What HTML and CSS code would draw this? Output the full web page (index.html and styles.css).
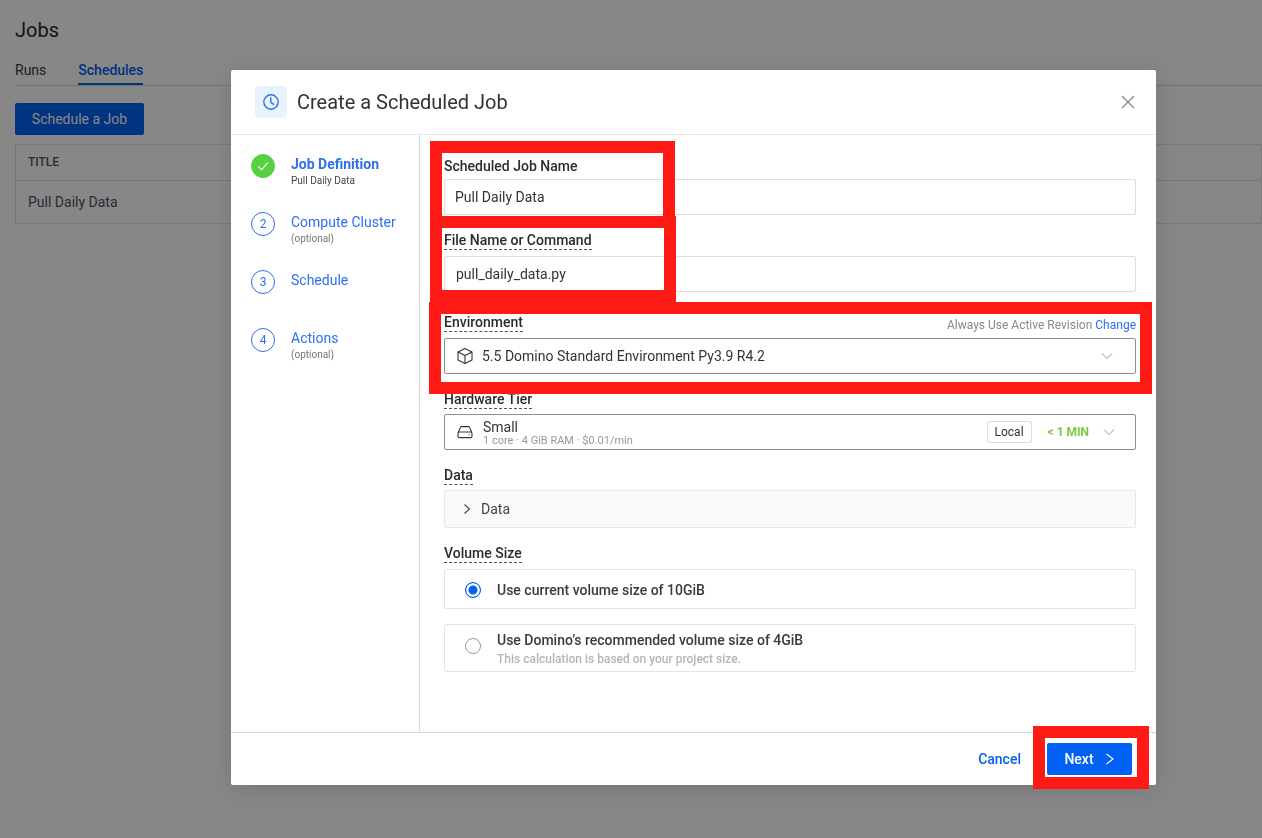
FILE: index.html
```html
<!DOCTYPE html>
<html lang="en">
<head>
    <meta charset="UTF-8">
    <meta name="viewport" content="width=device-width, initial-scale=1.0">
    <title>Jobs</title>
    <link rel="stylesheet" href="styles.css">
</head>
<body>

<div class="page">
    <h1 class="page-title">Jobs</h1>
    <div class="tabs">
        <span class="tab">Runs</span>
        <span class="tab tab-active">Schedules</span>
    </div>
    <button class="btn-schedule">Schedule a Job</button>
    <table class="jobs-table">
        <thead>
            <tr><th>TITLE</th></tr>
        </thead>
        <tbody>
            <tr><td>Pull Daily Data</td></tr>
        </tbody>
    </table>
</div>

<div class="overlay"></div>

<div class="modal">
    <div class="modal-header">
        <span class="modal-icon">
            <svg width="18" height="18" viewBox="0 0 18 18" fill="none" stroke="#2e6ff2" stroke-width="1.4" stroke-linecap="round" stroke-linejoin="round">
                <circle cx="9" cy="9" r="7.2"/>
                <path d="M8.8 4.8V9.4L11.6 11.4"/>
            </svg>
        </span>
        <h2 class="modal-title">Create a Scheduled Job</h2>
        <svg class="modal-close" width="14" height="14" viewBox="0 0 14 14" fill="none" stroke="#808080" stroke-width="1.1">
            <path d="M1 1L13 13M13 1L1 13"/>
        </svg>
    </div>

    <div class="modal-body">
        <div class="steps">
            <div class="step">
                <span class="step-num step-done">
                    <svg width="14" height="14" viewBox="0 0 14 14" fill="none" stroke="#fff" stroke-width="1.2">
                        <path d="M2.2 7.4L5.6 10.6L11.8 3.6"/>
                    </svg>
                </span>
                <div>
                    <div class="step-title step-current">Job Definition</div>
                    <div class="step-sub step-sub-dark">Pull Daily Data</div>
                </div>
            </div>
            <div class="step">
                <span class="step-num">2</span>
                <div>
                    <div class="step-title">Compute Cluster</div>
                    <div class="step-sub">(optional)</div>
                </div>
            </div>
            <div class="step">
                <span class="step-num">3</span>
                <div>
                    <div class="step-title">Schedule</div>
                </div>
            </div>
            <div class="step">
                <span class="step-num">4</span>
                <div>
                    <div class="step-title">Actions</div>
                    <div class="step-sub">(optional)</div>
                </div>
            </div>
        </div>

        <div class="form">
            <div class="field">
                <div class="field-head field-head-first"><span class="label label-plain">Scheduled Job Name</span></div>
                <input class="text-input" type="text" value="Pull Daily Data">
            </div>
            <div class="field field-wide">
                <div class="field-head field-head-gap"><span class="label">File Name or Command</span></div>
                <input class="text-input text-input-file" type="text" value="pull_daily_data.py">
            </div>
            <div class="field">
                <div class="field-head field-head-gap">
                    <span class="label">Environment</span>
                    <span class="revision">Always Use Active Revision <a class="link">Change</a></span>
                </div>
                <div class="select">
                    <svg class="select-icon" width="18" height="18" viewBox="0 0 18 18" fill="none" stroke="#333" stroke-width="1.1" stroke-linejoin="round">
                        <path d="M9 1.5L16 5V13L9 16.5L2 13V5Z"/>
                        <path d="M2 5L9 8.6L16 5M9 8.6V16.5"/>
                    </svg>
                    <span class="select-text">5.5 Domino Standard Environment Py3.9 R4.2</span>
                    <svg class="chevron" width="12" height="12" viewBox="0 0 12 12" fill="none" stroke="#999" stroke-width="1">
                        <path d="M1 3.5L6 8.5L11 3.5"/>
                    </svg>
                </div>
            </div>
            <div class="field">
                <div class="field-head"><span class="label">Hardware Tier</span></div>
                <div class="select select-tier">
                    <svg class="select-icon select-icon-drive" width="16" height="14" viewBox="0 0 16 14" fill="none" stroke="#333" stroke-width="1.1" stroke-linejoin="round">
                        <path d="M1.2 7.5L3.4 2.4C3.6 1.9 4 1.6 4.6 1.6H11.4C12 1.6 12.4 1.9 12.6 2.4L14.8 7.5"/>
                        <rect x="1" y="7" width="14" height="5.6" rx="1.4"/>
                        <path d="M11.6 9.8H12.6"/>
                    </svg>
                    <div class="tier">
                        <div class="tier-name">Small</div>
                        <div class="tier-info">1 core · 4 GiB RAM · $0.01/min</div>
                    </div>
                    <span class="tag">Local</span>
                    <span class="eta">&lt; 1 MIN</span>
                    <svg class="chevron" width="12" height="12" viewBox="0 0 12 12" fill="none" stroke="#999" stroke-width="1">
                        <path d="M1 3.5L6 8.5L11 3.5"/>
                    </svg>
                </div>
            </div>
            <div class="field">
                <div class="field-head"><span class="label">Data</span></div>
                <div class="collapse">
                    <svg width="8" height="12" viewBox="0 0 8 12" fill="none" stroke="#444" stroke-width="1.1">
                        <path d="M1.5 1.5L6.5 6L1.5 10.5"/>
                    </svg>
                    <span>Data</span>
                </div>
            </div>
            <div class="field field-last">
                <div class="field-head field-head-gap"><span class="label">Volume Size</span></div>
                <div class="radio-card">
                    <span class="radio radio-on"></span>
                    <span class="radio-title">Use current volume size of 10GiB</span>
                </div>
                <div class="radio-card radio-card-tall">
                    <span class="radio"></span>
                    <div>
                        <div class="radio-title">Use Domino’s recommended volume size of 4GiB</div>
                        <div class="radio-sub">This calculation is based on your project size.</div>
                    </div>
                </div>
            </div>
        </div>
    </div>

    <div class="modal-footer">
        <a class="btn-cancel">Cancel</a>
        <button class="btn-next">Next
            <svg width="10" height="14" viewBox="0 0 10 14" fill="none" stroke="#fff" stroke-width="1.1">
                <path d="M1.5 2L8 7L1.5 12"/>
            </svg>
        </button>
    </div>
</div>

<!-- red annotation boxes -->
<div class="mark mark-name"></div>
<div class="mark mark-file"></div>
<div class="mark mark-env"></div>
<div class="mark mark-next"></div>

</body>
</html>
```

FILE: styles.css
```css
* {
    box-sizing: border-box;
}
html, body {
    margin: 0;
    height: 100%;
    overflow: hidden;
}
body {
    font-family: Roboto, 'Liberation Sans', sans-serif;
    font-size: 14px;
    color: #333;
    background-color: #fff;
}

/* page behind the dialog */
.page {
    padding: 18px 0 0 15px;
}
.page-title {
    margin: 0;
    font-size: 20px;
    line-height: 24px;
    font-weight: 400;
    color: #2b2b2b;
}
.tabs {
    display: flex;
    gap: 32px;
    height: 34px;
    margin-top: 10px;
    padding-top: 7px;
    border-bottom: 1px solid #d9d9d9;
}
.tab {
    line-height: 22px;
    color: #3a3a3a;
}
.tab-active {
    height: 26px;
    font-weight: 500;
    color: #0061f2;
    border-bottom: 2px solid #0061f2;
}
.btn-schedule {
    display: block;
    width: 129px;
    height: 32px;
    margin-top: 17px;
    border: 0;
    border-radius: 2px;
    background-color: #0061f2;
    color: #fff;
    font: 400 14px Roboto, sans-serif;
}
.jobs-table {
    width: 100%;
    margin-top: 9px;
    border-collapse: collapse;
    border: 1px solid #e4e4e4;
}
.jobs-table th, .jobs-table td {
    padding: 0 12px;
    text-align: left;
    color: #4a5568;
    border-bottom: 1px solid #e4e4e4;
}
.jobs-table th {
    height: 36px;
    padding-bottom: 2px;
    font-size: 12px;
    font-weight: 500;
}
.jobs-table td {
    height: 43px;
    font-size: 14px;
}

.overlay {
    position: fixed;
    inset: 0;
    background-color: rgba(0, 0, 0, 0.47);
}

/* dialog */
.modal {
    position: absolute;
    left: 231px;
    top: 70px;
    width: 925px;
    height: 715px;
    display: flex;
    flex-direction: column;
    background-color: #fff;
    border-radius: 2px;
    box-shadow: 0 4px 24px rgba(0, 0, 0, 0.12);
}
.modal-header {
    display: flex;
    align-items: center;
    height: 65px;
    padding: 0 21px 1px 24px;
    border-bottom: 1px solid #e8e8e8;
}
.modal-icon {
    display: flex;
    align-items: center;
    justify-content: center;
    width: 32px;
    height: 32px;
    border-radius: 4px;
    background-color: #e9f2ff;
}
.modal-title {
    flex: 1;
    margin: 0 0 0 10px;
    font-size: 20px;
    font-weight: 400;
    color: #333;
}
.modal-body {
    flex: 1;
    display: flex;
    min-height: 0;
}

.steps {
    width: 189px;
    padding: 19px 0 0 20px;
    border-right: 1px solid #d9d9d9;
}
.step {
    display: flex;
    gap: 16px;
    height: 58px;
}
.step-num {
    flex: none;
    display: flex;
    align-items: center;
    justify-content: center;
    width: 24px;
    height: 24px;
    border: 1px solid #2e6ff2;
    border-radius: 50%;
    font-size: 12px;
    color: #2e6ff2;
}
.step-done {
    border-color: #57d142;
    background-color: #57d142;
}
.step-title {
    font-size: 14px;
    line-height: 20px;
    color: #2e6ff2;
}
.step-current {
    font-weight: 700;
}
.step-sub {
    margin-top: 1px;
    font-size: 10px;
    line-height: 12px;
    color: #777;
}
.step-sub-dark {
    color: #444;
}

.form {
    flex: 1;
    padding: 22px 20px 0 24px;
}
.field {
    margin-bottom: 16px;
}
.field-wide {
    margin-bottom: 21px;
}
.field-head {
    display: flex;
    justify-content: space-between;
    margin-bottom: 5px;
}
.field-head-first {
    margin-bottom: 4px;
}
.field-head-gap {
    margin-bottom: 6px;
}
.label {
    font-size: 14px;
    line-height: 18px;
    font-weight: 500;
    color: #2b2b2b;
    border-bottom: 1px dashed #555;
}
.label-plain {
    border-bottom: 0;
}
.revision {
    height: 19px;
    font-size: 12px;
    line-height: 24px;
    color: #888;
}
.link {
    color: #2e6ff2;
}
.text-input {
    display: block;
    width: 100%;
    height: 36px;
    padding: 0 10px;
    border: 1px solid #ddd;
    border-radius: 2px;
    outline: none;
    font: 400 14px Roboto, sans-serif;
    color: #333;
}
.text-input-file {
    padding-left: 11px;
}

.select {
    display: flex;
    align-items: center;
    height: 36px;
    padding: 0 22px 0 11px;
    border: 1px solid #8f8f8f;
    border-radius: 2px;
}
.select-tier {
    padding-right: 20px;
}
.select-icon {
    flex: none;
    margin-right: 8px;
}
.select-icon-drive {
    margin: 0 10px 0 1px;
}
.select-text {
    flex: 1;
    color: #333;
}
.chevron {
    flex: none;
}
.tier {
    flex: 1;
    padding-top: 3px;
}
.tier-name {
    font-size: 14px;
    line-height: 14px;
}
.tier-info {
    margin-top: 1px;
    font-size: 11px;
    line-height: 12px;
    color: #999;
}
.tag {
    display: flex;
    align-items: center;
    justify-content: center;
    width: 45px;
    height: 22px;
    border: 1px solid #ddd;
    border-radius: 2px;
    font-size: 12px;
    color: #333;
}
.eta {
    margin: 0 14px 0 16px;
    font-size: 12px;
    font-weight: 700;
    color: #7ac943;
}

.collapse {
    display: flex;
    align-items: center;
    gap: 10px;
    height: 38px;
    padding-left: 18px;
    border: 1px solid #e8e8e8;
    border-radius: 2px;
    background-color: #fafafa;
    color: #444;
}

.radio-card {
    display: flex;
    align-items: center;
    gap: 16px;
    height: 40px;
    margin-bottom: 15px;
    padding: 1px 0 0 20px;
    border: 1px solid #e4e4e4;
    border-radius: 2px;
}
.radio-card-tall {
    height: 48px;
    padding-top: 4px;
}
.radio-card-tall .radio {
    margin-bottom: 8px;
}
.radio {
    flex: none;
    width: 16px;
    height: 16px;
    border: 1px solid #999;
    border-radius: 50%;
    background-color: #fff;
}
.radio-on {
    border-color: #0061f2;
    background-color: #0061f2;
    box-shadow: inset 0 0 0 2.5px #fff;
}
.radio-title {
    font-weight: 500;
    line-height: 18px;
    color: #3a3a3a;
}
.radio-sub {
    font-size: 12px;
    font-weight: 500;
    line-height: 20px;
    color: #b5b5b5;
}

.modal-footer {
    display: flex;
    align-items: center;
    justify-content: flex-end;
    gap: 26px;
    height: 53px;
    padding: 0 24px 0 0;
    border-top: 1px solid #d9d9d9;
}
.btn-cancel {
    font-weight: 500;
    color: #0061f2;
}
.btn-next {
    display: flex;
    align-items: center;
    justify-content: center;
    gap: 11px;
    width: 85px;
    height: 32px;
    border: 0;
    border-radius: 2px;
    background-color: #0061f2;
    color: #fff;
    font: 500 14px Roboto, sans-serif;
}

/* red boxes drawn over the screenshot */
.mark {
    position: absolute;
    border: 12px solid #ff1a16;
}
.mark-name {
    left: 430px;
    top: 141px;
    width: 245px;
    height: 87px;
}
.mark-file {
    left: 430px;
    top: 216px;
    width: 246px;
    height: 86px;
}
.mark-env {
    left: 429px;
    top: 302px;
    width: 723px;
    height: 92px;
}
.mark-next {
    left: 1033px;
    top: 726px;
    width: 116px;
    height: 63px;
}
```
